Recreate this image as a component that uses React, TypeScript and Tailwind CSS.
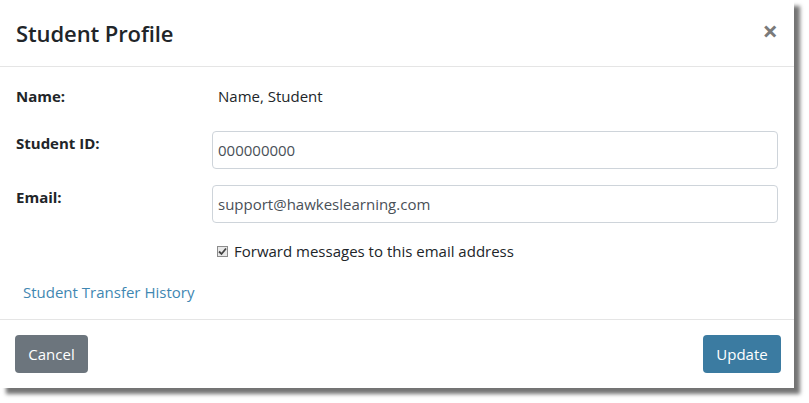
export default function App() {
  return (
    <div className="w-[809px] h-[403px] bg-white font-['Open_Sans',sans-serif] text-[#212529]">
      <div className="w-[794px] h-[388px] bg-white flex flex-col shadow-[6px_6px_4px_rgba(0,0,0,0.55)]">
        {/* header */}
        <div className="h-[67px] flex items-center justify-between pl-4 pr-4 border-b border-[#e5e5e5]">
          <h4 className="text-[22px] font-semibold leading-none tracking-[-0.1px]">Student Profile</h4>
          <button className="text-[27px] font-bold text-[#7a7a7a] leading-none -mt-[5px]">×</button>
        </div>

        {/* body */}
        <div className="flex-1 flex flex-col pt-[17px] pl-4 pr-4 text-[15px]">
          <div className="flex h-6 leading-6">
            <div className="w-[196px] font-bold">Name:</div>
            <div className="pl-[6px]">Name, Student</div>
          </div>

          <div className="flex mt-[23px]">
            <div className="w-[196px] font-bold leading-6">Student ID:</div>
            <input
              className="w-[566px] h-[38px] border border-[#ced4da] rounded-[4px] px-[5px] text-[#495057] outline-none"
              defaultValue="000000000"
            />
          </div>

          <div className="flex mt-4">
            <div className="w-[196px] font-bold leading-6">Email:</div>
            <input
              className="w-[566px] h-[38px] border border-[#ced4da] rounded-[4px] px-[5px] text-[#495057] outline-none"
              defaultValue="support@hawkeslearning.com"
            />
          </div>

          <div className="flex items-center mt-4 h-6 pl-[201px]">
            <span className="w-[11px] h-[11px] border border-[#8c8c8c] bg-[#e8e8e8] flex items-center justify-center">
              <svg width="9" height="9" viewBox="0 0 9 9">
                <path d="M1 4.5 L3.5 7 L8 1.5" fill="none" stroke="#444" strokeWidth="1.8" />
              </svg>
            </span>
            <span className="ml-[6px]">Forward messages to this email address</span>
          </div>

          <div className="mt-[17px] h-6 leading-6 pl-[7px] text-[#3f87b2]">Student Transfer History</div>
        </div>

        {/* footer */}
        <div className="h-[69px] border-t border-[#e5e5e5] flex items-center justify-between pl-[15px] pr-[13px]">
          <button className="h-[38px] w-[73px] rounded-[4px] bg-[#6c757d] text-white text-[15px]">Cancel</button>
          <button className="h-[38px] w-[78px] rounded-[4px] bg-[#3b7ba1] text-white text-[15px]">Update</button>
        </div>
      </div>
    </div>
  );
}
